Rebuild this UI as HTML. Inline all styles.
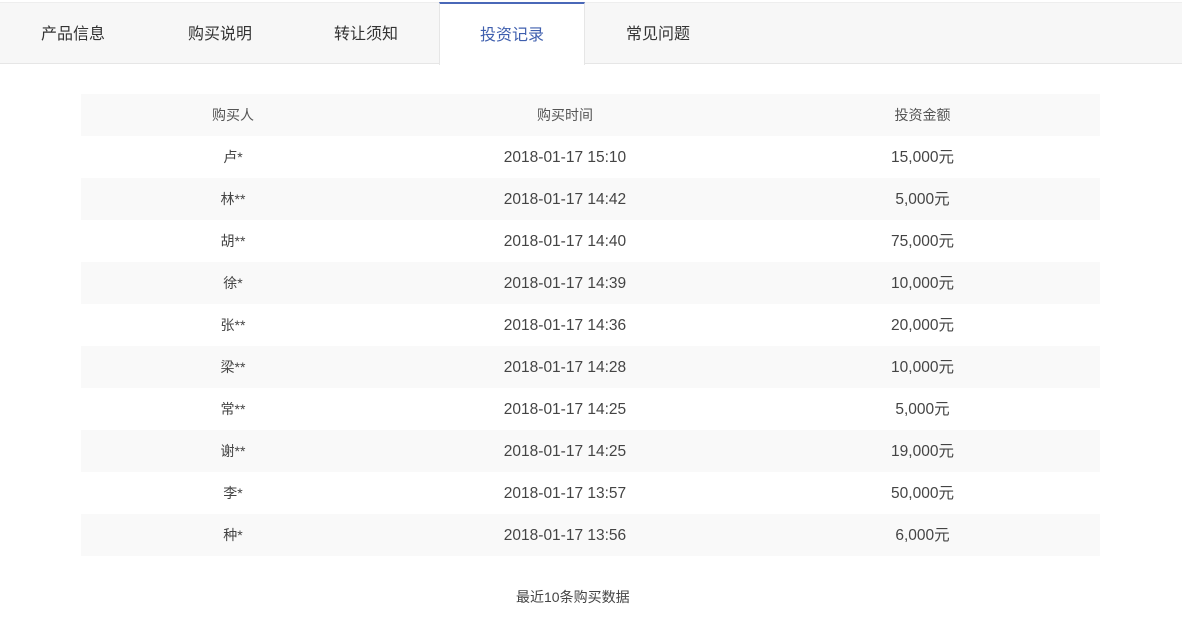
<!DOCTYPE html>
<html><head><meta charset="utf-8"><style>
*{margin:0;padding:0;box-sizing:border-box}
body{width:1182px;height:619px;background:#fff;font-family:"Liberation Sans","Noto Sans CJK SC",sans-serif;color:#555;overflow:hidden;position:relative}
.tabs{position:absolute;left:0;top:2px;width:1182px;height:62px;background:#f7f7f7;border-bottom:1px solid #e6e6e6;border-top:1px solid #eee}
.tab{position:absolute;top:-1px;width:146px;height:62px;line-height:66px;text-align:center;font-size:16px;color:#333}
.tab.act{background:#fff;border-top:2px solid #4a68b8;border-left:1px solid #e6e6e6;border-right:1px solid #e6e6e6;height:63px;color:#3f5fae;line-height:64px}
.tbl{position:absolute;left:81px;top:94px;width:1019px}
.r{height:42px;display:flex;font-size:15.5px;color:#444}
.r.g{background:#f9f9f9}
.r div{text-align:center;line-height:43px}
.r div:nth-child(1){width:304px;font-size:14px;line-height:42px}
.r div:nth-child(2){width:360px}
.r div:nth-child(3){width:355px;line-height:44px}
.r.h div{font-size:14px;color:#555;line-height:42px}
.foot{position:absolute;top:587px;left:516px;font-size:14px;color:#444}
</style></head><body>
<div class="tabs">
<div class="tab" style="left:0">产品信息</div>
<div class="tab" style="left:147px">购买说明</div>
<div class="tab" style="left:293px">转让须知</div>
<div class="tab act" style="left:439px">投资记录</div>
<div class="tab" style="left:585px">常见问题</div>
</div>
<div class="tbl">
<div class="r h g"><div>购买人</div><div>购买时间</div><div>投资金额</div></div>
<div class="r"><div>卢*</div><div>2018-01-17 15:10</div><div>15,000元</div></div>
<div class="r g"><div>林**</div><div>2018-01-17 14:42</div><div>5,000元</div></div>
<div class="r"><div>胡**</div><div>2018-01-17 14:40</div><div>75,000元</div></div>
<div class="r g"><div>徐*</div><div>2018-01-17 14:39</div><div>10,000元</div></div>
<div class="r"><div>张**</div><div>2018-01-17 14:36</div><div>20,000元</div></div>
<div class="r g"><div>梁**</div><div>2018-01-17 14:28</div><div>10,000元</div></div>
<div class="r"><div>常**</div><div>2018-01-17 14:25</div><div>5,000元</div></div>
<div class="r g"><div>谢**</div><div>2018-01-17 14:25</div><div>19,000元</div></div>
<div class="r"><div>李*</div><div>2018-01-17 13:57</div><div>50,000元</div></div>
<div class="r g"><div>种*</div><div>2018-01-17 13:56</div><div>6,000元</div></div>
</div>
<div class="foot">最近10条购买数据</div>
</body></html>
